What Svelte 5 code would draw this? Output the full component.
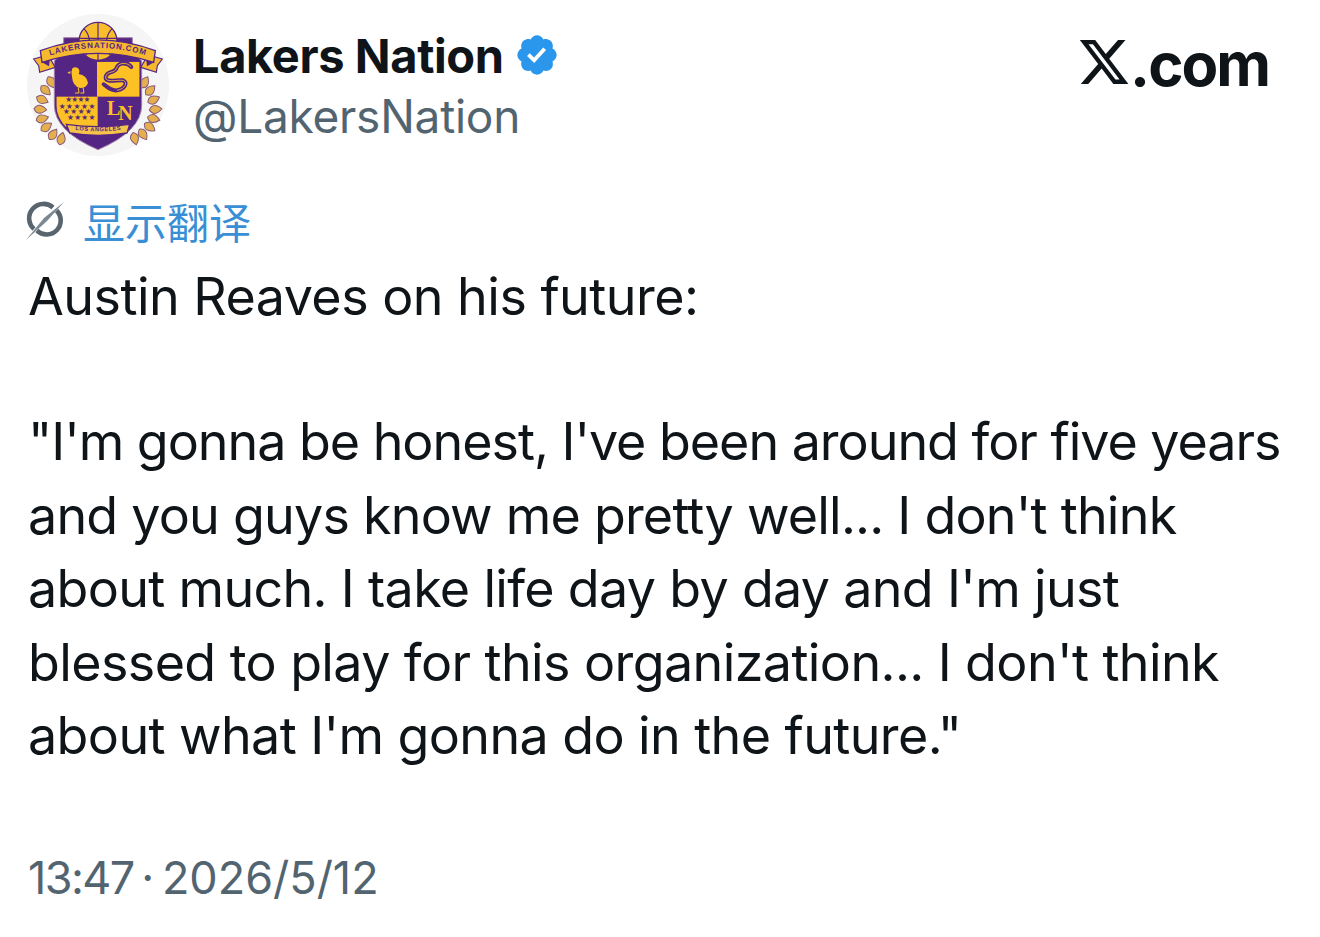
<script>
  const leaves = [
    [95, 232, -30], [78, 256, -45], [68, 284, -65], [62, 313, -85],
    [68, 341, -105], [80, 366, -125], [100, 388, -145], [125, 401, -165],
  ];
  const starRows = [
    [137, 292, 4, 75], [117, 311, 5, 110], [130, 328, 4, 87], [142, 346, 4, 85],
  ];
  const bodyLines = [
    { text: `"I'm gonna be honest, I've been around for five years`, spacing: -1.03 },
    { text: "and you guys know me pretty well... I don't think", spacing: -0.78 },
    { text: "about much. I take life day by day and I'm just", spacing: -0.68 },
    { text: "blessed to play for this organization... I don't think", spacing: -0.6 },
    { text: `about what I'm gonna do in the future."`, spacing: -0.6 },
  ];
</script>

<main class="tweet">
  <header class="head">
    <svg class="avatar" viewBox="22 27 426 426" aria-label="Lakers Nation">
      <circle cx="235" cy="240" r="213" fill="#f5f5f6" />

      <!-- laurels -->
      {#each leaves as [x, y, r]}
        <path d="M-19 0Q-6 -24 19 0Q-6 24 -19 0Z" transform="translate({x} {y}) rotate({r + 90})" fill="#e4b04e" stroke="#8a5a78" stroke-width="3" />
        <path d="M-19 0Q-6 -24 19 0Q-6 24 -19 0Z" transform="translate({470 - x} {y}) rotate({-r - 90})" fill="#e4b04e" stroke="#8a5a78" stroke-width="3" />
      {/each}

      <!-- shield -->
      <path d="M132 98H338V140L366 168V300Q366 378 235 434Q104 378 104 300V168L132 140Z" fill="#552583" stroke="#a67fa8" stroke-width="3" />

      <!-- basketball -->
      <circle cx="235" cy="109" r="57" fill="#f7bd2c" stroke="#552583" stroke-width="4" />
      <path d="M235 52v114M178 100h114M192 70q30 30 8 80M278 70q-30 30 -8 80" fill="none" stroke="#552583" stroke-width="3.5" />

      <clipPath id="shieldClip">
        <path d="M110 170H360V300Q360 374 235 428Q110 374 110 300Z" />
      </clipPath>
      <g clip-path="url(#shieldClip)">
        <rect x="232" y="140" width="130" height="135" fill="#fdc126" />
        <rect x="107" y="275" width="127" height="90" fill="#fdc126" />
      </g>

      <!-- bottom ribbon -->
      <path d="M140 358Q235 372 330 358L322 384Q235 398 150 384Z" fill="#f5c24a" stroke="#552583" stroke-width="4" />
      <path id="losArc" d="M150 372Q235 386 322 372" fill="none" />
      <text class="crest" font-size="17" fill="#552583" letter-spacing="1.6"><textPath href="#losArc" startOffset="50%" text-anchor="middle">LOS ANGELES</textPath></text>

      <!-- top ribbon -->
      <path d="M42 162L57 182L60 202L107 187L85 150Z" fill="#f5b82e" stroke="#552583" stroke-width="3.5" />
      <path d="M428 162L413 182L410 202L363 187L385 150Z" fill="#f5b82e" stroke="#552583" stroke-width="3.5" />
      <path d="M67 172L88 184L90 166ZM403 172L382 184L380 166Z" fill="#552583" />
      <path d="M62 137Q235 72 407 137L402 172Q235 118 67 172Z" fill="#f5b82e" stroke="#552583" stroke-width="4" />
      <path id="siteArc" d="M74 157Q235 101 396 157" fill="none" />
      <text class="crest" font-size="24" fill="#552583" letter-spacing="2.5"><textPath href="#siteArc" startOffset="50%" text-anchor="middle">LAKERSNATION.COM</textPath></text>

      <!-- chick -->
      <path d="M158 190q12 -8 20 3q3 10 -1 14q24 4 28 26q-4 16 -24 16q-22 -6 -24 -34q-4 -14 1 -25Z" fill="#fdc126" />
      <path d="M152 198l-9 5l9 4Z" fill="#fdc126" />
      <path d="M176 248l2 16h-12M190 247l3 17h-11" fill="none" stroke="#fdc126" stroke-width="3" />

      <!-- snake -->
      <path d="M335 186C322 170 296 172 290 190C286 206 262 196 258 216C256 234 290 224 310 226C326 232 316 252 292 256C276 258 264 248 252 238" fill="none" stroke="#552583" stroke-width="12" stroke-linecap="round" />
      <path d="M335 186C322 170 296 172 290 190C286 206 262 196 258 216C256 234 290 224 310 226C326 232 316 252 292 256" fill="none" stroke="#fdc126" stroke-width="2.5" />

      <!-- stars -->
      {#each starRows as [x, y, n, w]}
        <text class="stars" x={x} y={y} font-size="23" fill="#5a2d6e" textLength={w} lengthAdjust="spacing">{"★".repeat(n)}</text>
      {/each}

      <!-- monogram -->
      <text class="mono" x="262" y="330" font-size="60" fill="#fdc126">L</text>
      <text class="mono" x="296" y="345" font-size="60" fill="#fdc126">N</text>
    </svg>

    <div class="who">
      <div class="name-row">
        <span class="name">Lakers Nation</span>
        <svg class="badge" viewBox="0 0 22 22" aria-label="Verified">
          <path fill="#2a96ec" d="M20.396 11c-.018-.646-.215-1.275-.57-1.816-.354-.54-.852-.972-1.438-1.246.223-.607.27-1.264.14-1.897-.131-.634-.437-1.218-.882-1.687-.47-.445-1.053-.75-1.687-.882-.633-.13-1.29-.083-1.897.14-.273-.587-.704-1.086-1.245-1.44S11.647 1.62 11 1.604c-.646.017-1.273.213-1.813.568s-.969.854-1.24 1.44c-.608-.223-1.267-.272-1.902-.14-.635.13-1.22.436-1.69.882-.445.47-.749 1.055-.878 1.688-.13.633-.08 1.29.144 1.896-.587.274-1.087.705-1.443 1.245-.356.54-.555 1.17-.574 1.817.02.647.218 1.276.574 1.817.356.54.856.972 1.443 1.245-.224.606-.274 1.263-.144 1.896.13.634.433 1.218.877 1.688.47.443 1.054.747 1.687.878.633.132 1.29.084 1.897-.136.274.586.705 1.084 1.246 1.439.54.354 1.17.551 1.816.569.647-.016 1.276-.213 1.817-.567s.972-.854 1.245-1.44c.604.239 1.266.296 1.903.164.636-.132 1.22-.447 1.68-.907.46-.46.776-1.044.908-1.681s.075-1.299-.165-1.903c.586-.274 1.084-.705 1.439-1.246.354-.54.551-1.17.569-1.816z" />
          <path fill="#fff" d="M9.662 14.85l-3.429-3.428 1.293-1.302 2.072 2.072 4.4-4.794 1.347 1.246z" />
        </svg>
      </div>
      <div class="handle">@LakersNation</div>
    </div>

    <div class="brand">
      <svg class="x-mark" viewBox="0 0 24 24" aria-label="X">
        <path d="M18.244 2.25h3.308l-7.227 8.26 8.502 11.24H16.17l-5.214-6.817L4.99 21.75H1.68l7.73-8.835L1.254 2.25H8.08l4.713 6.231zm-1.161 17.52h1.833L7.084 4.126H5.117z" />
      </svg><span class="dotcom">.com</span>
    </div>
  </header>

  <div class="translate">
    <svg class="globe" viewBox="0 0 40 40">
      <path d="M8 29A13.5 13.5 0 0 1 27 7.5M30.5 10.5A13.5 13.5 0 0 1 11 30.5" fill="none" stroke="#58646e" stroke-width="4.6" />
      <path d="M38 2L21 21L0 40L18 18Z" fill="#7c8891" />
    </svg>
    <span>显示翻译</span>
  </div>

  <p class="body">Austin Reaves on his future:</p>
  <p class="body quote">
    {#each bodyLines as line}
      <span class="line" style:letter-spacing="{line.spacing}px">{line.text}</span>
    {/each}
  </p>

  <time class="stamp"><span class="clock">13:47</span> · 2026/5/12</time>
</main>

<style>
  :global(body) {
    margin: 0;
    background: #fff;
  }

  .tweet {
    width: 1320px;
    height: 937px;
    box-sizing: border-box;
    padding: 14px 40px 0 28px;
    font-family: Inter, "Noto Sans", sans-serif;
    color: #0f1419;
    overflow: hidden;
  }

  .head {
    display: flex;
    align-items: flex-start;
  }

  .avatar {
    width: 142px;
    height: 142px;
    flex: none;
    margin-left: -1px;
  }

  .crest {
    font-family: "Liberation Sans", sans-serif;
    font-weight: 700;
  }

  .stars {
    font-family: "DejaVu Sans", sans-serif;
  }

  .mono {
    font-family: "Liberation Serif", serif;
    font-weight: 700;
  }

  .who {
    margin-left: 24px;
    padding-top: 11px;
  }

  .name-row {
    display: flex;
    align-items: center;
    gap: 10px;
    height: 60px;
  }

  .name {
    font-size: 47px;
    font-weight: 700;
    letter-spacing: -0.4px;
  }

  .badge {
    width: 46px;
    height: 46px;
  }

  .handle {
    font-size: 46px;
    line-height: 62px;
    color: #536471;
    letter-spacing: -0.25px;
  }

  .brand {
    margin-left: auto;
    margin-right: 11px;
    display: flex;
    align-items: center;
    padding-top: 15px;
  }

  .dotcom {
    font-size: 60px;
    font-weight: 700;
    line-height: 70px;
    letter-spacing: -2px;
    margin-left: -1px;
  }

  .x-mark {
    width: 54px;
    height: 54px;
    margin: -5px 0 0 -1px;
    fill: #0f1419;
  }

  .translate {
    display: flex;
    align-items: center;
    gap: 17px;
    margin-top: 34px;
    height: 60px;
    font-family: "Noto Sans CJK SC", sans-serif;
    font-size: 42px;
    color: #3a8fd4;
  }

  .globe {
    width: 40px;
    height: 40px;
    margin-left: -2px;
  }

  .body {
    margin: 10px 0 0;
    font-size: 52px;
    line-height: 73.5px;
    letter-spacing: -0.53px;
    white-space: nowrap;
  }

  .quote {
    margin-top: 71.5px;
  }

  .line {
    display: block;
  }

  .stamp {
    display: block;
    margin-top: 75px;
    font-size: 45px;
    line-height: 60px;
    word-spacing: -5px;
    color: #536471;
  }

  .clock {
    letter-spacing: -1.6px;
  }
</style>
